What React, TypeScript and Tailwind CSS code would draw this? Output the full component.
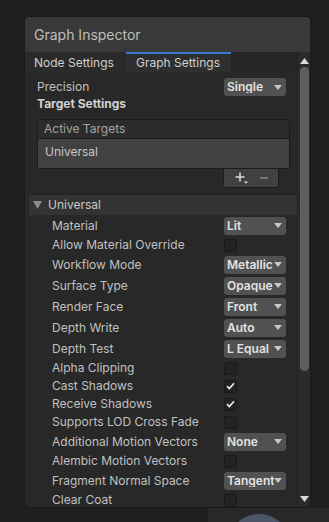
import React from "react";

type Row =
  | { label: string; kind: "drop"; value: string }
  | { label: string; kind: "check"; checked?: boolean };

const rows: Row[] = [
  { label: "Material", kind: "drop", value: "Lit" },
  { label: "Allow Material Override", kind: "check" },
  { label: "Workflow Mode", kind: "drop", value: "Metallic" },
  { label: "Surface Type", kind: "drop", value: "Opaque" },
  { label: "Render Face", kind: "drop", value: "Front" },
  { label: "Depth Write", kind: "drop", value: "Auto" },
  { label: "Depth Test", kind: "drop", value: "L Equal" },
  { label: "Alpha Clipping", kind: "check" },
  { label: "Cast Shadows", kind: "check", checked: true },
  { label: "Receive Shadows", kind: "check", checked: true },
  { label: "Supports LOD Cross Fade", kind: "check" },
  { label: "Additional Motion Vectors", kind: "drop", value: "None" },
  { label: "Alembic Motion Vectors", kind: "check" },
  { label: "Fragment Normal Space", kind: "drop", value: "Tangent" },
  { label: "Clear Coat", kind: "check" },
];

const Arrow = () => (
  <svg width="8" height="5" viewBox="0 0 8 5" className="shrink-0">
    <path d="M0 0 H8 L4 5 Z" fill="#c8c8c8" />
  </svg>
);

const Dropdown = ({ value }: { value: string }) => (
  <div className="w-[62px] h-[18px] rounded-[3px] bg-[#515151] flex items-center pl-[3px] pr-[4px]">
    <span className="w-[48px] overflow-hidden whitespace-nowrap text-[12px] font-semibold text-[#e2e2e2] leading-none">
      {value}
    </span>
    <span className="flex-1" />
    <Arrow />
  </div>
);

const Checkbox = ({ checked }: { checked?: boolean }) => (
  <div className="w-[13px] h-[13px] rounded-[2px] bg-[#232323] border border-[#191919] flex items-center justify-center">
    {checked && (
      <svg width="9" height="8" viewBox="0 0 9 8">
        <path d="M1 4.2 L3.4 6.5 L8 1.2" stroke="#eeeeee" strokeWidth="1.6" fill="none" />
      </svg>
    )}
  </div>
);

export default function App() {
  return (
    <div
      className="w-[329px] h-[522px] overflow-hidden bg-[#1e1e1e] pt-4"
      style={{ fontFamily: "Inter, 'Noto Sans', sans-serif" }}
    >
      <div className="ml-6 w-[287px] h-[492px] rounded-[5px] border border-[#1a1a1a] bg-[#282828] flex flex-col overflow-hidden">
        {/* title */}
        <div className="h-[35px] shrink-0 bg-[#393939] flex items-center pl-[9px] text-[14px] text-[#bdbdbd]">
          Graph Inspector
        </div>
        <div className="flex flex-1 min-h-0">
          <div className="flex-1 flex flex-col min-w-0 overflow-hidden">
            {/* tabs */}
            <div className="h-[20px] shrink-0 flex bg-[#252525] text-[12px] text-[#d0d0d0]">
              <div className="w-[101px] pl-[9px] pt-[1px] flex items-center bg-[#2a2a2a]">Node Settings</div>
              <div className="w-[105px] pl-[10px] flex items-center bg-[#2e2e2e] border-t-2 border-[#3a7bd5]">
                Graph Settings
              </div>
            </div>
            {/* precision */}
            <div className="h-[18px] shrink-0 mt-[6px] flex items-center pl-[12px] pr-[11px] justify-between text-[12px] text-[#c0c0c0]">
              <span>Precision</span>
              <Dropdown value="Single" />
            </div>
            <div className="h-[16px] shrink-0 pl-[12px] flex items-center text-[12px] font-bold text-[#d2d2d2]">
              Target Settings
            </div>
            {/* active targets list */}
            <div className="shrink-0 mt-[7px] ml-[12px] mr-[7px] rounded-t-[3px] border border-[#1c1c1c] overflow-hidden">
              <div className="h-[19px] bg-[#2c2c2c] border-b border-[#1c1c1c] pl-[6px] flex items-center text-[12px] text-[#a3a3a3]">
                Active Targets
              </div>
              <div className="h-[29px] bg-[#414141] pl-[7px] pt-[4px] text-[12px] text-[#c8c8c8]">
                Universal
              </div>
            </div>
            <div className="shrink-0 flex justify-end mr-[18px]">
              <div className="w-[56px] h-[19px] bg-[#414141] border border-t-0 border-[#1c1c1c] rounded-b-[3px] flex items-center justify-center gap-[12px] pb-[1px]">
                <svg width="13" height="12" viewBox="0 0 13 12">
                  <path d="M5 0.5 V9.5 M0.5 5 H9.5" stroke="#dadada" strokeWidth="1.5" />
                  <path d="M9 9.5 H13 L11 11.8 Z" fill="#dadada" />
                </svg>
                <svg width="8" height="10" viewBox="0 0 8 10">
                  <path d="M0 5 H8" stroke="#8a8a8a" strokeWidth="1.5" />
                </svg>
              </div>
            </div>
            {/* foldout */}
            <div className="mt-[6px] ml-[4px] h-[21px] shrink-0 bg-[#333333] border-t border-[#222222] flex items-center pl-[4px] gap-[6px] text-[12px] text-[#c8c8c8]">
              <svg width="9" height="8" viewBox="0 0 9 8">
                <path d="M0 0 H9 L4.5 8 Z" fill="#8c8c8c" />
              </svg>
              <span>Universal</span>
            </div>
            {/* properties */}
            <div className="flex flex-col shrink-0">
              {rows.map((r) => (
                <div
                  key={r.label}
                  className={`${r.kind === "drop" ? "h-[21px]" : "h-[18px]"} shrink-0 flex items-center justify-between pl-[27px] pr-[11px] text-[12px] text-[#c0c0c0]`}
                >
                  <span className="whitespace-nowrap">{r.label}</span>
                  {r.kind === "drop" ? (
                    <Dropdown value={r.value} />
                  ) : (
                    <div className="w-[62px]">
                      <Checkbox checked={r.checked} />
                    </div>
                  )}
                </div>
              ))}
            </div>
          </div>
          {/* scrollbar */}
          <div className="w-[13px] shrink-0 bg-[#2b2b2b] border-l border-[#232323] flex flex-col items-center pt-[6px] pb-[5px]">
            <svg width="9" height="6" viewBox="0 0 9 6">
              <path d="M0 6 H9 L4.5 0 Z" fill="#d8d8d8" />
            </svg>
            <div className="mt-[3px] w-[9px] h-[304px] rounded-[5px] bg-[#5f5f5f]" />
            <div className="flex-1" />
            <svg width="9" height="6" viewBox="0 0 9 6">
              <path d="M0 0 H9 L4.5 6 Z" fill="#d8d8d8" />
            </svg>
          </div>
        </div>
      </div>
      {/* viewport peeking below */}
      <div className="ml-[208px] h-[20px] bg-[#282828] overflow-hidden flex justify-center pr-[20px]">
        <div className="mt-[6px] w-[64px] h-[64px] rounded-full bg-[#4b5567]" />
      </div>
    </div>
  );
}
